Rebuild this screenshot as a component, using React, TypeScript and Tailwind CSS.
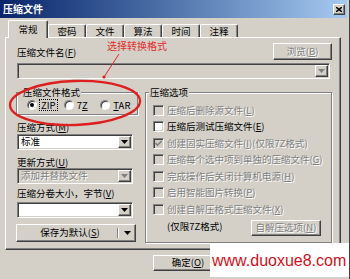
import React from "react";

const SUNKEN =
  "border border-t-[#808080] border-l-[#808080] border-r-white border-b-white shadow-[inset_1px_1px_0_#404040,inset_-1px_-1px_0_#d4d0c8]";
const RAISED =
  "border border-t-white border-l-white border-r-[#404040] border-b-[#404040] shadow-[inset_-1px_-1px_0_#808080,inset_1px_1px_0_#d4d0c8]";
const DIS = "text-[#808080] [text-shadow:1px_1px_0_#ffffff]";
const GROUP =
  "border border-[#808080] shadow-[inset_1px_1px_0_#ffffff,1px_1px_0_#ffffff]";

function Arrow({ disabled }: { disabled?: boolean }) {
  return (
    <div
      className={`${RAISED} bg-[#d4d0c8] w-[13px] h-full flex items-center justify-center shrink-0`}
    >
      <svg width="7" height="4" viewBox="0 0 7 4">
        <polygon points="0,0 7,0 3.5,4" fill={disabled ? "#808080" : "#000000"} />
      </svg>
    </div>
  );
}

function Combo({
  text,
  white,
  disabled,
  className,
}: {
  text?: React.ReactNode;
  white?: boolean;
  disabled?: boolean;
  className?: string;
}) {
  return (
    <div
      className={`${SUNKEN} ${white ? "bg-white" : "bg-[#d4d0c8]"} p-[1px] h-[16px] flex ${className ?? ""}`}
    >
      <div
        className={`flex-1 flex items-center pl-[2px] leading-none ${disabled ? DIS : ""}`}
      >
        {text}
      </div>
      <Arrow disabled={disabled} />
    </div>
  );
}

function Check({ checked, enabled }: { checked?: boolean; enabled?: boolean }) {
  return (
    <div
      className={`${SUNKEN} w-[11px] h-[11px] shrink-0 ${enabled ? "bg-white" : "bg-[#d4d0c8]"} flex items-center justify-center`}
    >
      {checked && (
        <svg width="7" height="7" viewBox="0 0 7 7">
          <polyline
            points="0.5,3 2.5,5.2 6.5,1"
            fill="none"
            stroke="#808080"
            strokeWidth="1.6"
          />
        </svg>
      )}
    </div>
  );
}

function Radio({ on }: { on?: boolean }) {
  return (
    <div className="w-[10px] h-[10px] rounded-full bg-white border border-t-[#808080] border-l-[#808080] border-r-white border-b-white shadow-[inset_1px_1px_0_#404040] flex items-center justify-center shrink-0">
      {on && <div className="w-[4px] h-[4px] rounded-full bg-black" />}
    </div>
  );
}

function Tab({ label, first }: { label: string; first?: boolean }) {
  if (first) {
    return (
      <div className="relative z-10 w-[40px] h-[18px] -mb-[1px] bg-[#d4d0c8] border-t border-l border-r border-t-white border-l-white border-r-[#404040] rounded-t-[2px] shadow-[inset_-1px_0_0_#808080] flex justify-center pt-[2px] leading-[12px]">
        {label}
      </div>
    );
  }
  return (
    <div className="w-[38px] h-[13px] bg-[#d4d0c8] border-t border-l border-r border-t-white border-l-white border-r-[#404040] rounded-t-[2px] shadow-[inset_-1px_0_0_#808080] flex justify-center leading-[12px]">
      {label}
    </div>
  );
}

const options: { text: React.ReactNode; checked?: boolean; enabled?: boolean }[] = [
  { text: <>压缩后删除源文件(<u>L</u>)</> },
  { text: <>压缩后测试压缩文件(<u>E</u>)</>, enabled: true },
  { text: <>创建固实压缩文件(<u>I</u>)(仅限7Z格式)</>, checked: true },
  { text: <>压缩每个选中项到单独的压缩文件(<u>G</u>)</> },
  { text: <>完成操作后关闭计算机电源(<u>H</u>)</> },
  { text: <>启用智能图片转换(<u>P</u>)</> },
  { text: <>创建自解压格式压缩文件(<u>X</u>)</> },
];

export default function App() {
  return (
    <div className="relative w-[350px] h-[279px] overflow-hidden bg-[#d4d0c8] text-[9.5px] text-black font-['Noto_Sans_CJK_SC','Noto_Sans',sans-serif] border-r border-r-[#404040]">
      <div className="flex flex-col h-full pr-[2px]">
        {/* title bar */}
        <div className="h-[18px] shrink-0 flex items-center justify-between pl-[3px] pr-[2px] bg-linear-to-r from-[#0a246a] to-[#a6caf0]">
          <span className="text-white font-bold text-[10px] leading-none">压缩文件</span>
          <div
            className={`${RAISED} bg-[#d4d0c8] w-[12px] h-[11px] flex items-center justify-center`}
          >
            <svg width="6" height="5" viewBox="0 0 6 5">
              <path d="M0 0 L6 5 M6 0 L0 5" stroke="#000000" strokeWidth="1.4" />
            </svg>
          </div>
        </div>

        {/* body */}
        <div className="pl-[5px] pr-[6px] pt-[2px]">
          {/* tabs */}
          <div className="flex items-end h-[17px] pl-[3px]">
            <Tab label="常规" first />
            <Tab label="密码" />
            <Tab label="文件" />
            <Tab label="算法" />
            <Tab label="时间" />
            <Tab label="注释" />
          </div>

          {/* panel */}
          <div className="h-[213px] border border-t-white border-l-white border-r-[#404040] border-b-[#404040] shadow-[inset_-1px_-1px_0_#808080]">
            <div className="flex flex-col pl-[10px] pr-[8px]">
              <div className="flex items-center justify-between h-[17px] mt-[5px]">
                <span className="ml-[1px] leading-[12px]">
                  压缩文件名(<u>F</u>)
                </span>
                <div
                  className={`${RAISED} bg-[#d4d0c8] w-[59px] h-[17px] flex items-center justify-center leading-none ${DIS}`}
                >
                  浏览(<u>B</u>)
                </div>
              </div>
              <Combo className="mt-[3px] ml-[1px] mr-[2px]" disabled />

              <div className="flex items-start mt-[13px]">
                {/* left column */}
                <div className="w-[122px] flex flex-col shrink-0">
                  <div className={`${GROUP} h-[23px] flex flex-col`}>
                    <div className="-mt-[7px] ml-[5px] px-[1px] bg-[#d4d0c8] w-fit leading-[12px]">
                      压缩文件格式
                    </div>
                    <div className="flex items-center h-[12px] mt-[1px] ml-[10px]">
                      <div className="w-[38px] flex items-center gap-[2px]">
                        <Radio on />
                        <span className="border border-dotted border-black px-[1px] leading-[10px]">
                          ZIP
                        </span>
                      </div>
                      <div className="w-[38px] flex items-center gap-[3px]">
                        <Radio />
                        <span className="leading-[10px]">
                          7<u>Z</u>
                        </span>
                      </div>
                      <div className="w-[38px] flex items-center gap-[3px]">
                        <Radio />
                        <span className="leading-[10px]">
                          <u>T</u>AR
                        </span>
                      </div>
                    </div>
                  </div>
                  <span className="mt-[6px] ml-[1px] leading-[12px]">
                    压缩方式(<u>M</u>)
                  </span>
                  <Combo className="mt-[1px] ml-[1px] w-[116px]" white text="标准" />
                  <span className="mt-[6px] ml-[1px] leading-[12px]">
                    更新方式(<u>U</u>)
                  </span>
                  <Combo
                    className="ml-[1px] w-[116px]"
                    disabled
                    text="添加并替换文件"
                  />
                  <span className="mt-[3px] ml-[1px] leading-[12px]">
                    压缩分卷大小，字节(<u>V</u>)
                  </span>
                  <Combo className="mt-[3px] ml-[1px] w-[116px]" white />
                  <div
                    className={`${RAISED} mt-[6px] w-[120px] h-[18px] bg-[#d4d0c8] flex items-center`}
                  >
                    <div className="flex-1 flex justify-center leading-none pl-[6px]">
                      保存为默认(<u>S</u>)
                    </div>
                    <div className="w-[2px] h-[10px] border-l border-l-[#808080] border-r border-r-white" />
                    <div className="w-[16px] flex items-center justify-center">
                      <svg width="7" height="4" viewBox="0 0 7 4">
                        <polygon points="0,0 7,0 3.5,4" fill="#000000" />
                      </svg>
                    </div>
                  </div>
                </div>

                {/* right group */}
                <div className={`${GROUP} ml-[7px] w-[188px] h-[151px] flex flex-col`}>
                  <div className="-mt-[7px] ml-[3px] px-[1px] bg-[#d4d0c8] w-fit leading-[12px]">
                    压缩选项
                  </div>
                  <div className="mt-[4px] flex flex-col">
                    {options.map((o, i) => (
                      <div key={i} className="flex items-center h-[16.5px] pl-[7px] gap-[3px]">
                        <Check checked={o.checked} enabled={o.enabled} />
                        <span className={`leading-none whitespace-nowrap ${o.enabled ? "" : DIS}`}>
                          {o.text}
                        </span>
                      </div>
                    ))}
                    <div className="flex justify-between items-start pr-[10px]">
                      <span className="pl-[21px] leading-[16.5px]">(仅限7Z格式)</span>
                      <div
                        className={`${RAISED} mt-[2.5px] w-[70px] h-[16px] bg-[#d4d0c8] flex items-center justify-center leading-none ${DIS}`}
                      >
                        自解压选项(<u>N</u>)
                      </div>
                    </div>
                  </div>
                </div>
              </div>
            </div>
          </div>

          {/* bottom buttons */}
          <div className="flex mt-[5px] pl-[148px] gap-[6px]">
            <div
              className={`${RAISED} w-[70px] h-[16px] bg-[#d4d0c8] flex items-center justify-center leading-none`}
            >
              确定(<u>O</u>)
            </div>
          </div>
        </div>
      </div>

      {/* red annotation */}
      <svg
        className="absolute left-0 top-0 pointer-events-none"
        width="350"
        height="279"
        viewBox="0 0 350 279"
      >
        <ellipse
          cx="75"
          cy="103"
          rx="65"
          ry="22"
          fill="none"
          stroke="#dd1f1f"
          strokeWidth="2.4"
          transform="rotate(-2 75 103)"
        />
        <line x1="119" y1="54" x2="104" y2="77" stroke="#dd2a2a" strokeWidth="1" />
        <circle cx="104" cy="77" r="1.6" fill="#dd1f1f" />
      </svg>
      <div className="absolute left-[107px] top-[40px] text-[10px] leading-[11px] text-[#e22d2d] pointer-events-none whitespace-nowrap">
        选择转换格式
      </div>

      {/* watermark */}
      <div className="absolute left-[210px] top-[243px] w-[140px] h-[34px] bg-white pl-[2px] pt-[10px]">
        <span className="font-['Liberation_Sans',Arial,sans-serif] text-[16px] leading-[16px] text-[#d10f1b]">
          www.duoxue8.com
        </span>
      </div>
    </div>
  );
}
